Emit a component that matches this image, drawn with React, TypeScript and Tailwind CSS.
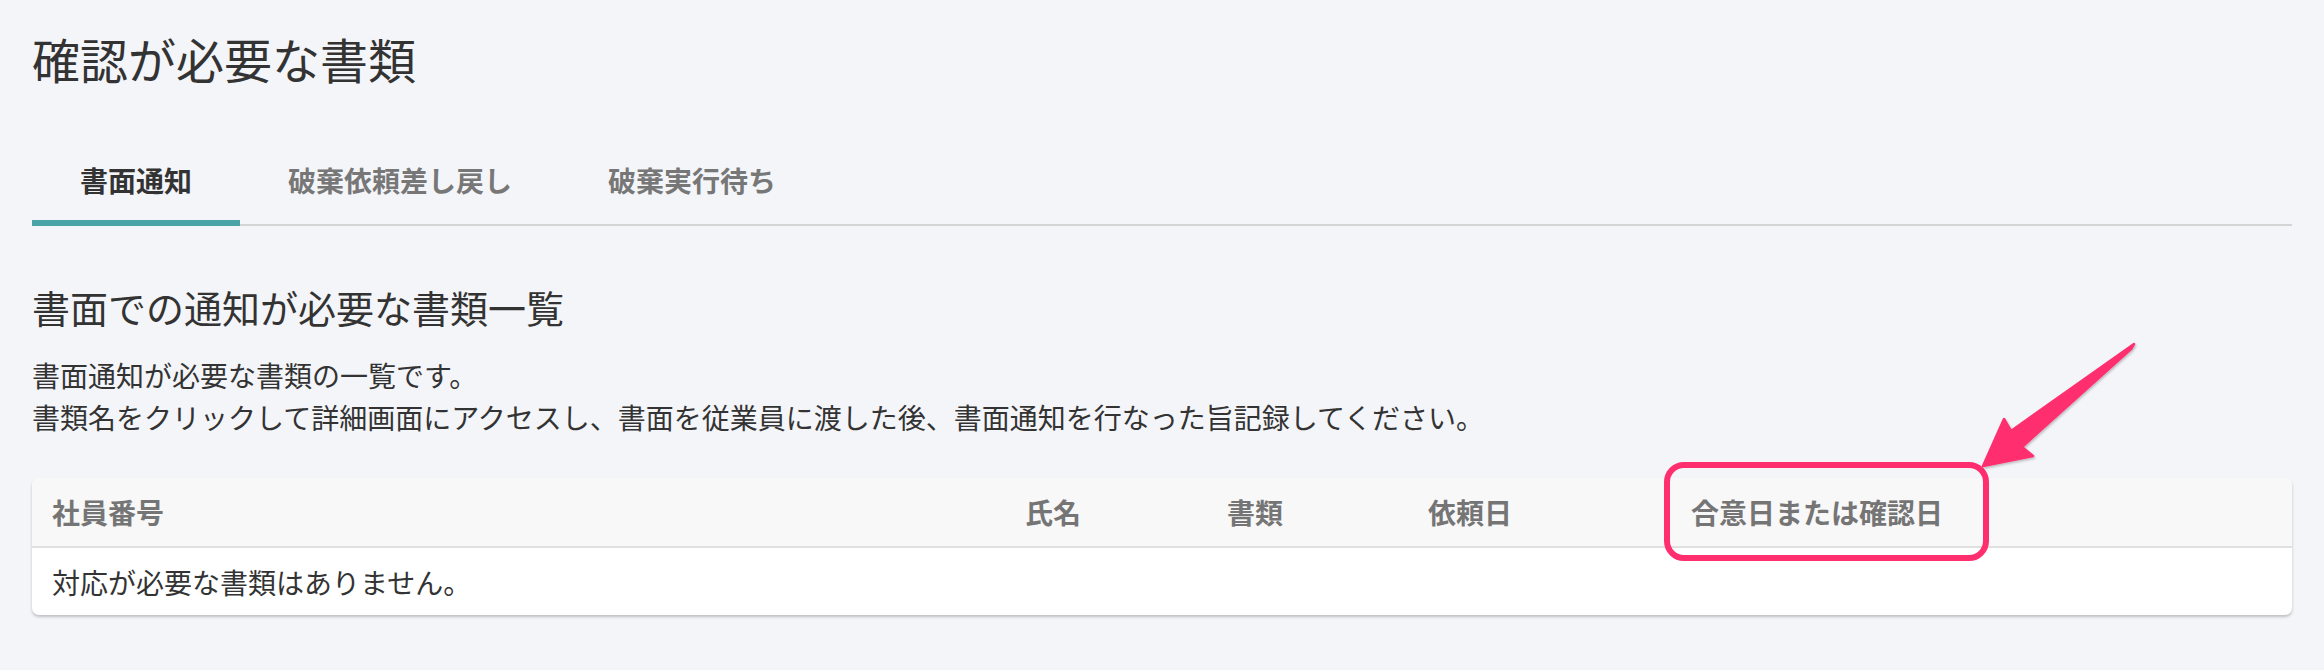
import React from 'react';

const tabs = ['書面通知', '破棄依頼差し戻し', '破棄実行待ち'];

const columns = ['社員番号', '氏名', '書類', '依頼日', '合意日または確認日'];

const Arrow: React.FC = () => (
  <svg
    className="absolute left-[1960px] top-[330px] pointer-events-none"
    width="190"
    height="150"
    viewBox="1960 330 190 150"
  >
    <defs>
      <filter id="arrowShadow" x="-20%" y="-20%" width="140%" height="140%">
        <feDropShadow dx="1" dy="1.5" stdDeviation="1.2" floodColor="#000" floodOpacity="0.25" />
      </filter>
    </defs>
    <path
      d="M2134 344 L2011 431 L2004 419 L1983 466 L2033 456 L2022 447 L2131 349 Z"
      fill="#ff2e6e"
      stroke="#ff2e6e"
      strokeWidth="2.5"
      strokeLinejoin="round"
      filter="url(#arrowShadow)"
    />
  </svg>
);

const App: React.FC = () => {
  const activeTab = 0;

  return (
    <div className="relative min-h-screen bg-[#f4f5f9] px-8 text-[#333] font-['Noto_Sans_CJK_JP','Noto_Sans',sans-serif]">
      <h1 className="pt-[34px] text-[48px] leading-none font-normal">確認が必要な書類</h1>

      {/* tabs */}
      <div className="mt-[84px] flex border-b-2 border-[#d4d4d4]">
        {tabs.map((tab, i) => (
          <div
            key={tab}
            className={
              i === activeTab
                ? '-mb-[2px] border-b-[6px] border-[#4aa3a6] px-[48px] pb-[26px] text-[28px] leading-[28px] font-bold text-[#333]'
                : '-mb-[2px] border-b-[6px] border-transparent px-[48px] pb-[26px] text-[28px] leading-[28px] font-bold text-[#777]'
            }
          >
            {tab}
          </div>
        ))}
      </div>

      <h2 className="mt-[62px] text-[38px] leading-none font-normal">書面での通知が必要な書類一覧</h2>

      <div className="mt-[28px] text-[28px] leading-[42px]">
        <p>書面通知が必要な書類の一覧です。</p>
        <p>書類名をクリックして詳細画面にアクセスし、書面を従業員に渡した後、書面通知を行なった旨記録してください。</p>
      </div>

      {/* table */}
      <div className="mt-[40px] rounded-[7px] bg-white shadow-[0_2px_3px_rgba(0,0,0,0.22)]">
        <div className="grid h-[68px] grid-cols-[973px_202px_201px_263px_1fr] items-center rounded-t-[7px] bg-[#f8f8f8] border-b-2 border-[#e0e0e0] box-content">
          {columns.map((col, i) => (
            <div key={col} className="relative px-5 text-[28px] leading-none font-bold text-[#757575]">
              {col}
              {i === columns.length - 1 && (
                <div className="absolute left-[-7px] top-[-36px] h-[99px] w-[325px] rounded-[20px] border-[6px] border-[#ff2e6e]" />
              )}
            </div>
          ))}
        </div>
        <div className="flex h-[67px] items-center px-5 text-[28px] leading-none text-[#333]">
          対応が必要な書類はありません。
        </div>
      </div>

      <div className="h-[53px]" />

      <Arrow />
    </div>
  );
};

export default App;
